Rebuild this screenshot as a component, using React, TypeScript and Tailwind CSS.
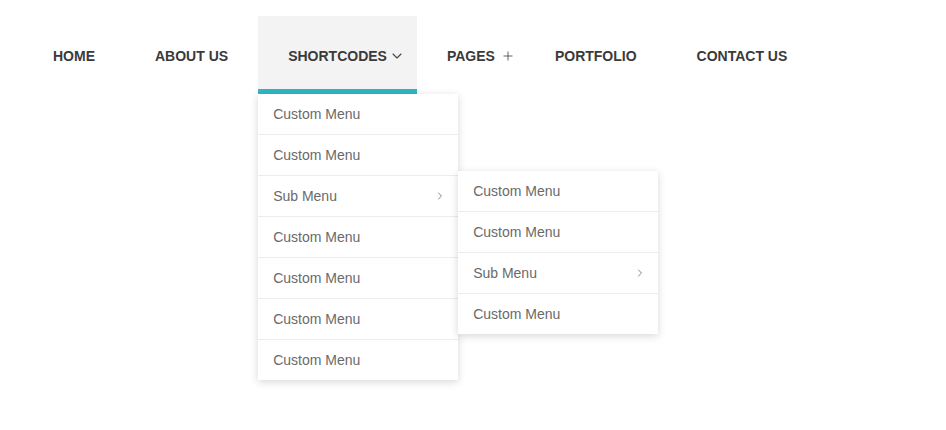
import { ChevronDown, ChevronRight, Plus } from 'lucide-react'

type NavItem = { label: string; icon?: 'down' | 'plus'; active?: boolean }

const navItems: NavItem[] = [
  { label: 'HOME' },
  { label: 'ABOUT US' },
  { label: 'SHORTCODES', icon: 'down', active: true },
  { label: 'PAGES', icon: 'plus' },
  { label: 'PORTFOLIO' },
  { label: 'CONTACT US' },
]

const mainMenu = ['Custom Menu', 'Custom Menu', 'Sub Menu', 'Custom Menu', 'Custom Menu', 'Custom Menu', 'Custom Menu']
const subMenu = ['Custom Menu', 'Custom Menu', 'Sub Menu', 'Custom Menu']

const MenuRow = ({ label, last }: { label: string; last: boolean }) => (
  <li
    className={`flex items-center justify-between pl-[15px] pr-[12px] text-[14px] font-normal text-[#6a6a6a] ${
      last ? 'h-[40px]' : 'h-[41px] border-b border-[#ececec]'
    }`}
  >
    <span>{label}</span>
    {label === 'Sub Menu' && <ChevronRight size={12} strokeWidth={1.6} className="text-[#666]" />}
  </li>
)

const Dropdown = () => (
  <ul className="absolute left-0 top-[78px] w-[200px] bg-white shadow-[0_2px_8px_rgba(0,0,0,0.16)]">
    {mainMenu.map((label, i) => (
      <div key={i} className="relative">
        <MenuRow label={label} last={i === mainMenu.length - 1} />
        {label === 'Sub Menu' && (
          <ul className="absolute left-full top-[-5px] z-10 w-[200px] bg-white shadow-[0_2px_8px_rgba(0,0,0,0.16)]">
            {subMenu.map((s, j) => (
              <MenuRow key={j} label={s} last={j === subMenu.length - 1} />
            ))}
          </ul>
        )}
      </div>
    ))}
  </ul>
)

export default function App() {
  return (
    <div className="h-[430px] w-full bg-white font-['Liberation_Sans',Arial,sans-serif]">
      <nav className="pl-[23px] pt-[16px]">
        <ul className="flex">
          {navItems.map((item) => (
            <li
              key={item.label}
              className={`relative flex h-[78px] items-center pl-[30px] pt-[2px] text-[14px] font-bold text-[#3a3a3a] ${
                item.icon === 'down' ? 'gap-[2px] pr-[12px]' : item.icon === 'plus' ? 'gap-[6px] pr-[10px]' : 'pr-[30px]'
              } ${item.active ? 'border-b-[5px] border-[#2fb6c6] bg-[#f3f3f3] pt-[7px]' : ''}`}
            >
              <span>{item.label}</span>
              {item.icon === 'down' && <ChevronDown size={16} strokeWidth={1.6} className="text-[#444]" />}
              {item.icon === 'plus' && <Plus size={14} strokeWidth={1.4} className="text-[#444]" />}
              {item.active && <Dropdown />}
            </li>
          ))}
        </ul>
      </nav>
    </div>
  )
}
